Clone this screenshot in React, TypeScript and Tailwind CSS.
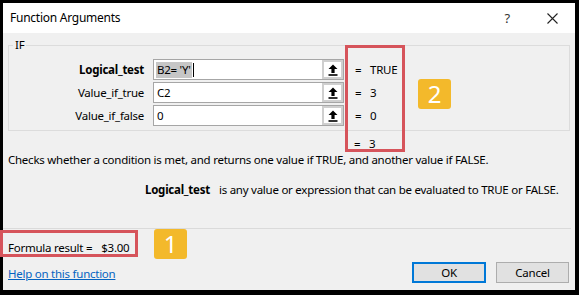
import type { ReactNode } from "react";

const font = { fontFamily: '"Noto Sans", "Segoe UI", sans-serif' };

function RefIcon() {
  return (
    <svg width="10" height="12" viewBox="0 0 10 12" aria-hidden="true">
      <path d="M5 0.5 L9.5 5 L6.6 5 L6.6 9 L3.4 9 L3.4 5 L0.5 5 Z" fill="#000" />
      <rect x="0.5" y="10.2" width="9" height="1.6" fill="#000" />
    </svg>
  );
}

function CloseIcon() {
  return (
    <svg width="11" height="11" viewBox="0 0 11 11" aria-hidden="true">
      <path d="M0.5 0.5 L10.5 10.5 M10.5 0.5 L0.5 10.5" stroke="#222" strokeWidth="1.1" />
    </svg>
  );
}

function ArgRow({
  label,
  bold,
  value,
  result,
  selected,
}: {
  label: string;
  bold?: boolean;
  value: ReactNode;
  result: string;
  selected?: boolean;
}) {
  return (
    <div className="flex h-[21px] items-center">
      <div className={`w-[135px] text-right text-black ${bold ? "font-bold" : ""}`}>{label}</div>
      <div className="ml-[9px] flex h-[21px] w-[191px] border border-[#a6a6a6] bg-white">
        <div className="flex flex-1 items-center pl-[2px] text-black">
          {selected ? (
            <>
              <span className="bg-[#c6c6c6] px-[1px]">{value}</span>
              <span className="ml-[1px] h-[14px] w-[1px] bg-black" />
            </>
          ) : (
            <span className="px-[1px]">{value}</span>
          )}
        </div>
        <div className="flex w-[21px] items-center justify-center border-2 border-[#cfcfcf] bg-white">
          <RefIcon />
        </div>
      </div>
      <div className="ml-[11px] flex text-black">
        <span className="w-[15px]">=</span>
        <span>{result}</span>
      </div>
    </div>
  );
}

function Badge({ n }: { n: string }) {
  return (
    <div className="flex h-[30px] w-[33px] items-center justify-center rounded-[3px] bg-[#f3b92b] text-[24px] leading-none tracking-normal text-white">
      {n}
    </div>
  );
}

export default function App() {
  return (
    <div
      className="h-[295px] w-[579px] overflow-hidden bg-black pb-[5px] pl-[3px] pr-[4px] pt-[3px] text-[11.5px] leading-[16px] tracking-[-0.25px]"
      style={font}
    >
      <div className="relative flex h-full flex-col bg-[#f0f0f0]">
        {/* title bar */}
        <div className="flex h-[30px] shrink-0 items-center bg-white pl-[7px] text-[12px] text-black">
          <span>Function Arguments</span>
          <span className="ml-auto text-[13px] text-[#333]">?</span>
          <span className="ml-[37px] mr-[17px] flex">
            <CloseIcon />
          </span>
        </div>

        {/* IF group box */}
        <div className="relative mx-[5px] mt-[12px] h-[86px] shrink-0 border border-[#dcdcdc] pt-[13px]">
          <span className="absolute -top-[9px] left-[4px] bg-[#f0f0f0] px-[2px] text-black">IF</span>
          <div className="flex flex-col gap-[2px]">
            <ArgRow label="Logical_test" bold value="B2= 'Y'" result="TRUE" selected />
            <ArgRow label="Value_if_true" value="C2" result="3" />
            <ArgRow label="Value_if_false" value="0" result="0" />
          </div>
        </div>

        {/* overall result */}
        <div className="mt-[5px] flex pl-[351px] text-black">
          <span className="w-[15px]">=</span>
          <span>3</span>
        </div>

        <p className="mt-0 whitespace-nowrap pl-[5px] text-black">
          Checks whether a condition is met, and returns one value if TRUE, and another value if FALSE.
        </p>

        <p className="mt-[14px] whitespace-nowrap pl-[142px] text-black">
          <span className="font-bold">Logical_test</span>
          <span className="ml-[9px]">is any value or expression that can be evaluated to TRUE or FALSE.</span>
        </p>

        <div className="mr-[4px] mt-[30px] h-px shrink-0 bg-[#dadada]" />

        <div className="mt-[11px] flex items-center pl-[5px] text-black">
          <span>Formula result =</span>
          <span className="ml-[9px]">$3.00</span>
        </div>

        <div className="mt-[6px] flex items-end justify-between pl-[5px] pr-[6px]">
          <a className="mb-[1px] text-[#0563c1] underline">Help on this function</a>
          <div className="flex gap-[10px]">
            <button className="h-[21px] w-[74px] border-2 border-[#0078d7] bg-[#e1e1e1] text-black">OK</button>
            <button className="h-[21px] w-[73px] border border-[#adadad] bg-[#e1e1e1] text-black">Cancel</button>
          </div>
        </div>

        {/* annotation overlays */}
        <div className="absolute left-[342px] top-[42px] h-[107px] w-[60px] border-[3px] border-[#d6545b]" />
        <div className="absolute left-[415px] top-[76px]">
          <Badge n="2" />
        </div>
        <div className="absolute -left-[3px] top-[227px] h-[27px] w-[138px] border-[3px] border-[#d6545b]" />
        <div className="absolute left-[151px] top-[226px]">
          <Badge n="1" />
        </div>
      </div>
    </div>
  );
}
